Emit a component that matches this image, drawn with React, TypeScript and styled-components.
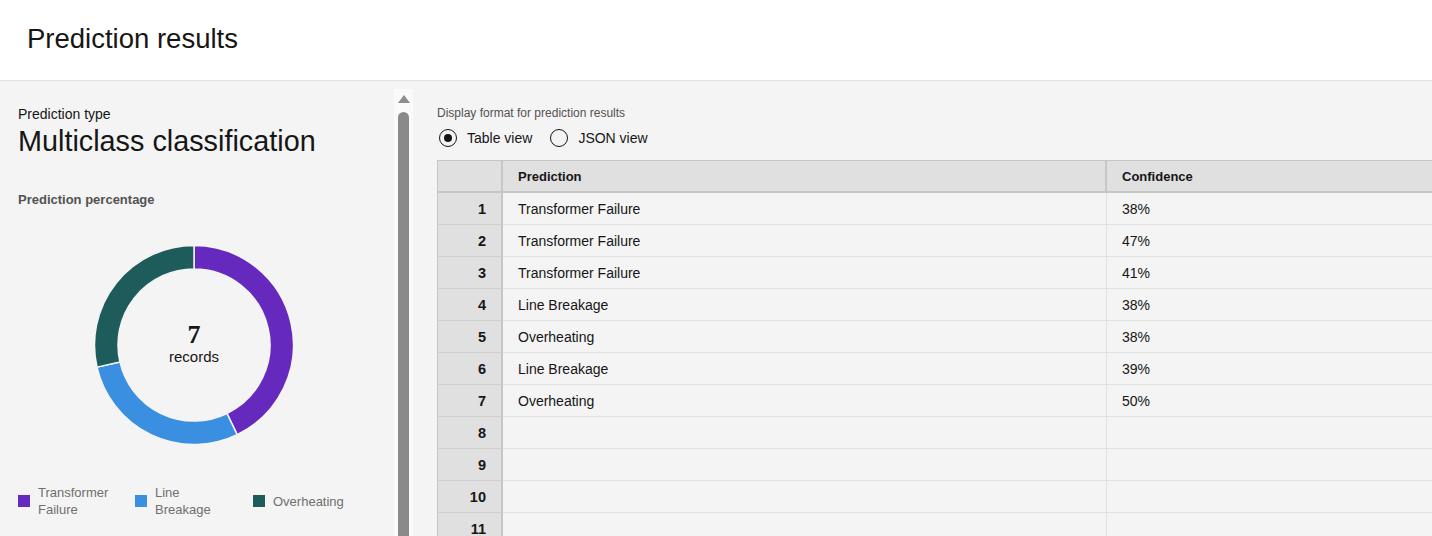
import styled, { createGlobalStyle } from "styled-components";

const GlobalStyle = createGlobalStyle`
  html, body {
    margin: 0;
    padding: 0;
    height: 536px;
    overflow: hidden;
    background: #f4f4f4;
    font-family: "Liberation Sans", Arial, sans-serif;
    color: #161616;
  }
  * { box-sizing: border-box; }
`;

const Page = styled.div`
  display: flex;
  flex-direction: column;
  height: 536px;
`;

const Header = styled.header`
  height: 81px;
  flex: none;
  background: #ffffff;
  border-bottom: 1px solid #e0e0e0;
  padding: 21px 0 0 27px;
`;

const Title = styled.h1`
  margin: 0;
  font-size: 27.5px;
  font-weight: 400;
  line-height: 36px;
`;

const Body = styled.div`
  display: flex;
  flex: 1;
  min-height: 0;
`;

const Sidebar = styled.aside`
  width: 394px;
  flex: none;
  padding: 24px 18px 0;
`;

const Label = styled.div`
  font-size: 14px;
  line-height: 18px;
`;

const BigValue = styled.div`
  font-size: 28.8px;
  line-height: 36px;
`;

const SectionTitle = styled.div`
  margin-top: 32px;
  font-size: 13px;
  font-weight: 700;
  line-height: 18px;
  color: #525252;
`;

const DonutWrap = styled.div`
  position: relative;
  width: 200px;
  height: 200px;
  margin: 36px 0 0 76px;
`;

const DonutCenter = styled.div`
  position: absolute;
  inset: 0;
  display: flex;
  flex-direction: column;
  align-items: center;
  justify-content: center;
`;

const Count = styled.div`
  font-family: "Liberation Serif", "Times New Roman", serif;
  font-size: 26px;
  font-weight: 700;
  line-height: 24px;
`;

const CountLabel = styled.div`
  font-size: 15px;
  line-height: 20px;
`;

const Legend = styled.div`
  display: grid;
  grid-template-columns: 117px 118px 117px;
  margin-top: 39px;
`;

const LegendItem = styled.div`
  display: flex;
  align-items: center;
  gap: 8px;
`;

const Swatch = styled.span<{ $color: string }>`
  width: 12px;
  height: 12px;
  flex: none;
  background: ${({ $color }) => $color};
`;

const LegendText = styled.span`
  max-width: 78px;
  font-size: 13px;
  line-height: 17px;
  color: #6f6f6f;
`;

const ScrollTrack = styled.div`
  width: 19px;
  flex: none;
  margin-top: 8px;
  background: #fafafa;
  display: flex;
  flex-direction: column;
  align-items: center;
`;

const ScrollArrow = styled.div`
  margin-top: 6px;
  width: 0;
  height: 0;
  border-left: 6px solid transparent;
  border-right: 6px solid transparent;
  border-bottom: 8px solid #8d8d8d;
`;

const ScrollThumb = styled.div`
  margin-top: 9px;
  width: 11px;
  flex: 1;
  background: #8a8a8a;
  border-radius: 6px 6px 0 0;
`;

const Main = styled.main`
  flex: 1;
  min-width: 0;
  overflow: hidden;
  padding: 24px 0 0 24px;
`;

const SmallLabel = styled.div`
  font-size: 12px;
  line-height: 16px;
  color: #525252;
`;

const RadioGroup = styled.div`
  display: flex;
  align-items: center;
  gap: 18px;
  margin: 7px 0 12px 2px;
`;

const RadioOption = styled.label`
  display: flex;
  align-items: center;
  gap: 10px;
  font-size: 14px;
  line-height: 20px;
`;

const RadioCircle = styled.span<{ $checked?: boolean }>`
  width: 18px;
  height: 18px;
  border: 1px solid #161616;
  border-radius: 50%;
  display: flex;
  align-items: center;
  justify-content: center;

  &::after {
    content: "";
    width: 8px;
    height: 8px;
    border-radius: 50%;
    background: ${({ $checked }) => ($checked ? "#161616" : "transparent")};
  }
`;

const Grid = styled.div`
  display: grid;
  grid-template-columns: 65px 604px 420px;
  width: max-content;
  border-top: 1px solid #c6c6c6;
  border-left: 1px solid #c6c6c6;
`;

const HeadCell = styled.div`
  height: 32px;
  background: #e0e0e0;
  border-bottom: 2px solid #c6c6c6;
  border-right: 2px solid #c6c6c6;
  padding: 0 15px;
  display: flex;
  align-items: center;
  font-size: 13px;
  font-weight: 700;
`;

const IndexCell = styled.div`
  height: 32px;
  background: #e0e0e0;
  border-right: 2px solid #c6c6c6;
  border-bottom: 1px solid #cfcfcf;
  padding-right: 15px;
  display: flex;
  align-items: center;
  justify-content: flex-end;
  font-size: 14.5px;
  font-weight: 700;
`;

const DataCell = styled.div`
  height: 32px;
  background: #f4f4f4;
  border-right: 1px solid #e0e0e0;
  border-bottom: 1px solid #e0e0e0;
  padding-left: 15px;
  display: flex;
  align-items: center;
  font-size: 14px;
`;

const categories = [
  { name: "Transformer Failure", color: "#6529bd", count: 3 },
  { name: "Line Breakage", color: "#3b8fe0", count: 2 },
  { name: "Overheating", color: "#1e5c5c", count: 2 },
];

const rows: [string, string][] = [
  ["Transformer Failure", "38%"],
  ["Transformer Failure", "47%"],
  ["Transformer Failure", "41%"],
  ["Line Breakage", "38%"],
  ["Overheating", "38%"],
  ["Line Breakage", "39%"],
  ["Overheating", "50%"],
  ["", ""],
  ["", ""],
  ["", ""],
  ["", ""],
  ["", ""],
];

function arcPath(start: number, end: number, rOut: number, rIn: number) {
  const pt = (a: number, r: number) => {
    const rad = ((a - 90) * Math.PI) / 180;
    return `${100 + r * Math.cos(rad)} ${100 + r * Math.sin(rad)}`;
  };
  const large = end - start > 180 ? 1 : 0;
  return [
    `M ${pt(start, rOut)}`,
    `A ${rOut} ${rOut} 0 ${large} 1 ${pt(end, rOut)}`,
    `L ${pt(end, rIn)}`,
    `A ${rIn} ${rIn} 0 ${large} 0 ${pt(start, rIn)}`,
    "Z",
  ].join(" ");
}

function Donut() {
  const total = categories.reduce((s, c) => s + c.count, 0);
  let angle = 0;
  return (
    <DonutWrap>
      <svg width="200" height="200" viewBox="0 0 200 200">
        {categories.map((c) => {
          const start = angle;
          angle += (c.count / total) * 360;
          return (
            <path
              key={c.name}
              d={arcPath(start, angle, 99.5, 76)}
              fill={c.color}
              stroke="#f4f4f4"
              strokeWidth="1.5"
            />
          );
        })}
      </svg>
      <DonutCenter>
        <Count>{total}</Count>
        <CountLabel>records</CountLabel>
      </DonutCenter>
    </DonutWrap>
  );
}

export default function App() {
  return (
    <Page>
      <GlobalStyle />
      <Header>
        <Title>Prediction results</Title>
      </Header>
      <Body>
        <Sidebar>
          <Label>Prediction type</Label>
          <BigValue>Multiclass classification</BigValue>
          <SectionTitle>Prediction percentage</SectionTitle>
          <Donut />
          <Legend>
            {categories.map((c) => (
              <LegendItem key={c.name}>
                <Swatch $color={c.color} />
                <LegendText>{c.name}</LegendText>
              </LegendItem>
            ))}
          </Legend>
        </Sidebar>
        <ScrollTrack>
          <ScrollArrow />
          <ScrollThumb />
        </ScrollTrack>
        <Main>
          <SmallLabel>Display format for prediction results</SmallLabel>
          <RadioGroup>
            <RadioOption>
              <RadioCircle $checked />
              Table view
            </RadioOption>
            <RadioOption>
              <RadioCircle />
              JSON view
            </RadioOption>
          </RadioGroup>
          <Grid>
            <HeadCell />
            <HeadCell>Prediction</HeadCell>
            <HeadCell>Confidence</HeadCell>
            {rows.map(([pred, conf], i) => (
              <>
                <IndexCell key={`i${i}`}>{i + 1}</IndexCell>
                <DataCell key={`p${i}`}>{pred}</DataCell>
                <DataCell key={`c${i}`}>{conf}</DataCell>
              </>
            ))}
          </Grid>
        </Main>
      </Body>
    </Page>
  );
}
